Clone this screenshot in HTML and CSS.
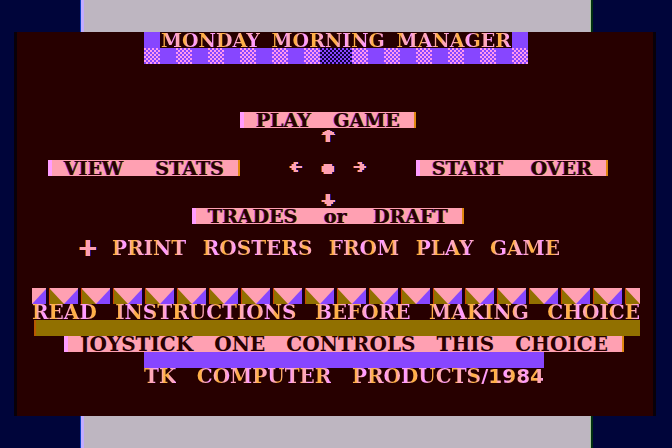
FILE: index.html
```
<!DOCTYPE html>
<html lang="en">
  <head>
    <meta charset="utf-8">
    <title>Monday Morning Manager</title>
    <link rel="stylesheet" href="styles.css">
  </head>

  <body>

    <div class="strip"></div>

    <main class="screen">
      <h1 class="title line tinted"><span>MONDAY</span> <span>MORNING</span> <span>MANAGER</span></h1>

      <svg class="checks" viewBox="0 0 384 16" preserveAspectRatio="none" shape-rendering="crispEdges" aria-hidden="true">
        <defs>
          <pattern id="dots" width="4" height="4" patternUnits="userSpaceOnUse">
            <path d="M0 0h2v2h2v2h-2v-2h-2z" fill="#ff98f0"/>
          </pattern>
          <pattern id="darkDots" width="4" height="4" patternUnits="userSpaceOnUse">
            <path d="M0 0h2v2h2v2h-2v-2h-2z" fill="#10003c"/>
          </pattern>
        </defs>
        <rect width="384" height="16" fill="#8746ff"/>
        <path fill="url(#dots)" d="M0 0h16v16h-16zM32 0h16v16h-16zM64 0h16v16h-16zM96 0h16v16h-16zM128 0h16v16h-16zM160 0h16v16h-16zM208 0h16v16h-16zM240 0h16v16h-16zM272 0h16v16h-16zM304 0h16v16h-16zM336 0h16v16h-16zM368 0h16v16h-16z"/>
        <rect x="176" width="32" height="16" fill="url(#darkDots)"/>
      </svg>

      <button class="choice line play"><span>PLAY</span> <span>GAME</span></button>
      <button class="choice line stats"><span>VIEW</span> <span>STATS</span></button>
      <button class="choice line start"><span>START</span> <span>OVER</span></button>
      <button class="choice line trades"><span>TRADES</span> <span>or</span> <span>DRAFT</span></button>

      <svg class="glyph up" viewBox="0 0 16 16" aria-hidden="true"><path d="M7 2h3v1h2v1h2v2h1v1h-5v7h-4v-7h-4v-1h1v-2h2v-1h2z"/></svg>
      <svg class="glyph left" viewBox="0 0 16 16" aria-hidden="true"><path d="M2 6h2v-2h2v-2h4v2h-2v2h6v2h-6v2h2v2h-4v-2h-2v-2h-2z"/></svg>
      <svg class="glyph dot" viewBox="0 0 16 16" aria-hidden="true"><path d="M4 4h8v2h2v6h-2v2h-8v-2h-2v-6h2z"/></svg>
      <svg class="glyph right" viewBox="0 0 16 16" aria-hidden="true"><path d="M14 6h-2v-2h-2v-2h-4v2h2v2h-6v2h6v2h-2v2h4v-2h2v-2h2z"/></svg>
      <svg class="glyph down" viewBox="0 0 16 16" aria-hidden="true"><path d="M6 2h4v6h5v2h-2v2h-2v2h-4v-2h-2v-2h-3v-2h4z"/></svg>
      <svg class="glyph plus" viewBox="0 0 16 16" aria-hidden="true"><path d="M6 0h4v7h6v3h-6v6h-4v-6h-6v-3h6z"/></svg>

      <p class="print line tinted"><span>PRINT</span> <span>ROSTERS</span> <span>FROM</span> <span>PLAY</span> <span>GAME</span></p>

      <svg class="pennants" viewBox="0 0 608 16" preserveAspectRatio="none" aria-hidden="true">
        <defs>
          <pattern id="flags" x="16" width="32" height="16" patternUnits="userSpaceOnUse">
            <rect width="32" height="16" fill="#ffa0b2"/>
            <path d="M2 1L16 16H2z" fill="#917000"/>
            <path d="M30 1L16 16H30z" fill="#8746ff"/>
            <rect width="1" height="16" fill="#270000"/>
            <rect x="1" width="1" height="16" fill="#c84400"/>
            <rect x="30" width="2" height="16" fill="#180018"/>
          </pattern>
        </defs>
        <rect width="608" height="16" fill="url(#flags)"/>
      </svg>

      <p class="read line tinted"><span>READ</span> <span>INSTRUCTIONS</span> <span>BEFORE</span> <span>MAKING</span> <span>CHOICE</span></p>
      <div class="gold"></div>
      <p class="choice line joystick"><span>JOYSTICK</span> <span>ONE</span> <span>CONTROLS</span> <span>THIS</span> <span>CHOICE</span></p>
      <div class="violet"></div>
      <p class="credit line tinted"><span>TK</span> <span>COMPUTER</span> <span>PRODUCTS<span class="year">/1984</span></span></p>
    </main>

    <div class="strip"></div>

  </body>

</html>
```

FILE: styles.css
```
* {
  box-sizing: border-box;
}

body {
  margin: 0;
  min-height: 100vh;
  display: flex;
  flex-direction: column;
  background-color: #00053a;
}

.strip {
  flex: 1;
  min-height: 32px;
  margin: 0 12%;
  background-color: #beb6c1;
  border-left: 3px solid #c2acff;
  border-right: 1px solid #a8c49c;
  box-shadow: -1px 0 #0840c0, 2px 0 #003010;
}

/* 38 character columns, 24 text rows */
.screen {
  display: grid;
  grid-template-columns: repeat(38, 1fr);
  grid-template-rows: repeat(24, 16px);
  margin: 0 16px 0 14px;
  padding: 0 13px 0 15px;
  border: solid #080008;
  border-width: 0 3px;
  background-color: #270000;
  font-family: "DejaVu Serif", serif;
  font-size: 19px;
  font-weight: bold;
  line-height: 16px;
}

.line {
  display: flex;
  justify-content: space-between;
  margin: 0;
  padding: 0;
  font: inherit;
  white-space: nowrap;
  color: #ffa8b8;
}

p.line {
  font-size: 20px;
}

/* composite-video colour bands across the letters */
.tinted > span {
  background-image: repeating-linear-gradient(90deg, #ffb048 0 4px, #ffa8b8 6px 9px, #ff9cff 11px 14px, #ffa8b8 16px 18px, #ffb048 20px);
  -webkit-background-clip: text;
  background-clip: text;
  -webkit-text-fill-color: transparent;
}

.title {
  grid-area: 1 / 8 / 2 / 32;
  padding: 0 1px;
  border: solid #8746ff;
  border-width: 0 16px;
}

.checks {
  grid-area: 2 / 8 / 3 / 32;
  width: 100%;
  height: 16px;
}

.choice {
  padding: 0 16px 0 12px;
  border: solid #ff9cff;
  border-width: 0 0 0 4px;
  background-color: #ffa0b2;
  box-shadow: inset -2px 0 #e08810;
  color: #270000;
  text-shadow: -1px 0 #7838e0, 1px 0 #ffac38;
}

.play {
  grid-area: 6 / 14 / 7 / 25;
}

.stats {
  grid-area: 9 / 2 / 10 / 14;
}

.start {
  grid-area: 9 / 25 / 10 / 37;
}

.trades {
  grid-area: 12 / 11 / 13 / 28;
}

.glyph {
  width: 16px;
  height: 16px;
  fill: #ffa0b2;
  overflow: visible;
  filter: drop-shadow(-1px 0 #a05010) drop-shadow(1px 0 #301080);
}

.up {
  grid-area: 7 / 19;
}

.left {
  grid-area: 9 / 17;
}

.dot {
  grid-area: 9 / 19;
}

.right {
  grid-area: 9 / 21;
}

.down {
  grid-area: 11 / 19;
}

.plus {
  grid-area: 14 / 4;
}

.print {
  grid-area: 14 / 6 / 15 / 34;
}

.pennants {
  grid-area: 17 / 1 / 18 / 39;
  width: 100%;
  height: 16px;
}

.read {
  grid-area: 18 / 1 / 19 / 39;
}

.gold {
  grid-area: 19 / 1 / 20 / 39;
  margin-left: 2px;
  background-color: #917000;
  border-left: 2px solid #b85800;
}

.joystick {
  grid-area: 20 / 3 / 21 / 38;
  text-shadow: none;
}

.violet {
  grid-area: 21 / 8 / 22 / 33;
  background-color: #8746ff;
}

.credit {
  grid-area: 22 / 8 / 23 / 33;
}

.year {
  font-family: "DejaVu Sans", sans-serif;
}
```
